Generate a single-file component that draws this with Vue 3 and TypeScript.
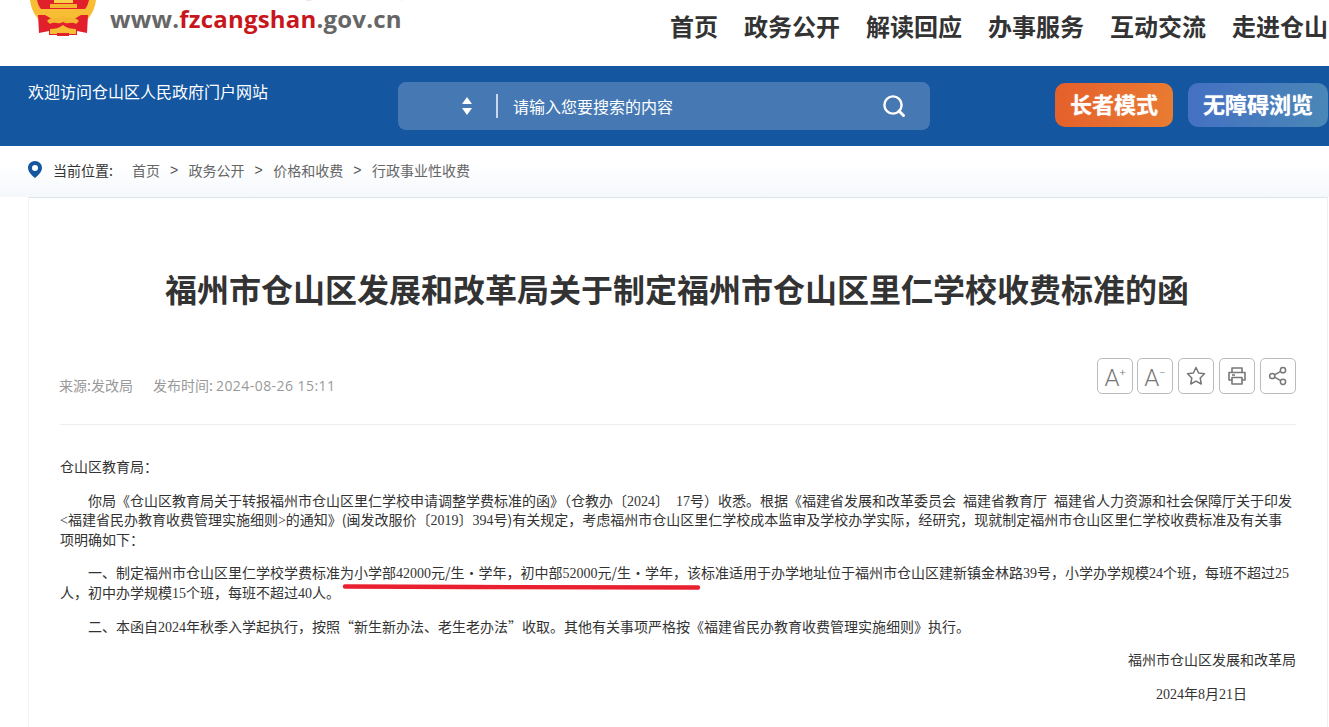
<script setup lang="ts">
const navItems = ['首页', '政务公开', '解读回应', '办事服务', '互动交流', '走进仓山']
const crumbs = ['首页', '政务公开', '价格和收费', '行政事业性收费']
</script>

<template>
  <div class="page">
    <header class="top">
      <div class="brand">
        <svg class="emblem" width="70" height="38" viewBox="0 0 70 38">
          <path d="M2 0 C3 8 6 15 12 21 L58 21 C64 15 67 8 68 0 Z" fill="#f6bd35" />
          <path d="M9 0 C10 4 11 7 13 9 H57 C59 7 60 4 61 0 Z" fill="#e2202c" />
          <path d="M26 0 H45 V3 H26 Z" fill="#f8d04a" />
          <path d="M22 4 H49 V8 H22 Z" fill="#f3b62e" />
          <path d="M12 10 H58 L56 14 H14 Z" fill="#f6bd35" />
          <path d="M10 15 L17 15 L24 19 H46 L53 15 H60 L59 33 L49 31 V35 H21 V31 L11 33 Z" fill="#e2202c" />
          <path d="M19 21 C24 15 30 20 35 16 C40 20 46 15 51 21 L48 24 C43 21 40 25 35 22 C30 25 27 21 22 24 Z" fill="#f3b62e" />
          <path d="M22 29 C27 29 31 28 35 25 C39 28 43 29 48 29 L48 34 H22 Z" fill="#f6bd35" />
          <path d="M29 33 H41 V36 H29 Z" fill="#e2202c" />
        </svg>
        <div class="brand-text">
          <div class="brand-name">福州市仓山区人民政府</div>
          <div class="brand-url">www.<span>fzcangshan</span>.gov.cn</div>
        </div>
      </div>
      <nav class="nav">
        <a v-for="item in navItems" :key="item">{{ item }}</a>
      </nav>
    </header>

    <div class="band">
      <div class="welcome">欢迎访问仓山区人民政府门户网站</div>
      <div class="search">
        <svg class="updown" width="10" height="18" viewBox="0 0 10 18">
          <path d="M5 0 L10 7 H0 Z M0 11 H10 L5 18 Z" fill="#fff" />
        </svg>
        <i class="sep"></i>
        <span class="placeholder">请输入您要搜索的内容</span>
        <svg class="glass" width="24" height="24" viewBox="0 0 24 24" fill="none" stroke="#fff">
          <circle cx="11" cy="11" r="8.6" stroke-width="2.4" />
          <path d="M17 17 L21.5 21.5" stroke-width="3" stroke-linecap="round" />
        </svg>
      </div>
      <a class="mode elder">长者模式</a>
      <a class="mode access">无障碍浏览</a>
    </div>

    <div class="crumbs">
      <svg width="14" height="17" viewBox="0 0 14 17">
        <path fill-rule="evenodd" d="M7 0 C3 0 0 3 0 6.8 C0 11 4 14.5 7 17 C10 14.5 14 11 14 6.8 C14 3 11 0 7 0 Z M7 4 A3 3 0 1 1 7 10 A3 3 0 1 1 7 4 Z" fill="#14569f" />
      </svg>
      <span class="here">当前位置:</span>
      <template v-for="(c, i) in crumbs" :key="c">
        <span v-if="i > 0" class="gt">&gt;</span>
        <a>{{ c }}</a>
      </template>
    </div>

    <main class="card">
      <h1>福州市仓山区发展和改革局关于制定福州市仓山区里仁学校收费标准的函</h1>
      <div class="meta">
        <div class="source">
          <span>来源:发改局</span>
          <span>发布时间: <span class="time">2024-08-26 15:11</span></span>
        </div>
        <div class="tools">
          <button type="button" class="font-btn">A<sup>+</sup></button>
          <button type="button" class="font-btn">A<sup>−</sup></button>
          <button type="button">
            <svg width="20" height="20" viewBox="0 0 20 20" fill="none" stroke="#777" stroke-width="1.5" stroke-linejoin="round">
              <path d="M10 1.5 L12.6 7 L18.5 7.8 L14.2 12 L15.3 18 L10 15.1 L4.7 18 L5.8 12 L1.5 7.8 L7.4 7 Z" />
            </svg>
          </button>
          <button type="button">
            <svg width="20" height="20" viewBox="0 0 20 20" fill="none" stroke="#777" stroke-width="1.6" stroke-linejoin="round">
              <path d="M5 6 V2 H15 V6" />
              <path d="M5 14 H2 V6.5 H18 V14 H15" />
              <path d="M5 11.5 H15 V18 H5 Z" />
              <path d="M5 9 H8" />
            </svg>
          </button>
          <button type="button">
            <svg width="20" height="20" viewBox="0 0 20 20" fill="none" stroke="#777" stroke-width="1.5">
              <circle cx="4.2" cy="10" r="2.6" />
              <circle cx="15" cy="4.2" r="2.6" />
              <circle cx="15" cy="15.8" r="2.6" />
              <path d="M6.5 8.8 L12.7 5.4 M6.5 11.2 L12.7 14.6" />
            </svg>
          </button>
        </div>
      </div>

      <article class="content">
        <p>仓山区教育局&#xFF1A;</p>
        <p class="indent">你局《仓山区教育局关于转报福州市仓山区里仁学校申请调整学费标准的函》&#xFF08;仓教办〔<b>2024</b>〕<b>&ensp;17</b>号&#xFF09;收悉。根据《福建省发展和改革委员会<b>&ensp;</b>福建省教育厅<b>&ensp;</b>福建省人力资源和社会保障厅关于印发<br><b>&lt;</b>福建省民办教育收费管理实施细则<b>&gt;</b>的通知》(闽发改服价〔<b>2019</b>〕<b>394</b>号)有关规定&#xFF0C;考虑福州市仓山区里仁学校成本监审及学校办学实际&#xFF0C;经研究&#xFF0C;现就制定福州市仓山区里仁学校收费标准及有关事<br>项明确如下&#xFF1A;</p>
        <p class="indent marked">一、制定福州市仓山区里仁学校学费标准为小学部<b>42000</b>元/生·学年&#xFF0C;初中部<b>52000</b>元/生·学年&#xFF0C;该标准适用于办学地址位于福州市仓山区建新镇金林路<b>39</b>号&#xFF0C;小学办学规模<b>24</b>个班&#xFF0C;每班不超过<b>25</b><br>人&#xFF0C;初中办学规模<b>15</b>个班&#xFF0C;每班不超过<b>40</b>人。
          <svg class="underline" width="362" height="9" viewBox="0 0 362 9">
            <path d="M3 3.5 C120 4 250 4.5 356 4.5" fill="none" stroke="#e8202f" stroke-width="4.4" stroke-linecap="round" />
          </svg>
        </p>
        <p class="indent">二、本函自<b>2024</b>年秋季入学起执行&#xFF0C;按照“新生新办法、老生老办法”收取。其他有关事项严格按《福建省民办教育收费管理实施细则》执行。</p>
        <p class="right">福州市仓山区发展和改革局</p>
        <p class="right date"><b>2024</b>年<b>8</b>月<b>21</b>日</p>
      </article>
    </main>
  </div>
</template>

<style scoped>
.page {
  width: 1329px;
  height: 727px;
  overflow: hidden;
  background: #fff;
  font-family: "Noto Sans CJK SC", "Liberation Sans", sans-serif;
  color: #333;
}

.top {
  height: 66px;
  display: flex;
  justify-content: space-between;
  overflow: hidden;
}

.brand {
  display: flex;
  margin-left: 28px;
  gap: 12px;
}

.emblem {
  flex: none;
}

.brand-name {
  margin-top: -45px;
  font-size: 41px;
  line-height: 46px;
  font-weight: 700;
  color: #e3a0a4;
  white-space: nowrap;
}

.brand-url {
  margin-top: 1px;
  font-family: "Open Sans", "Liberation Sans", sans-serif;
  font-size: 24px;
  line-height: 33px;
  font-weight: 700;
  letter-spacing: 0.2px;
  color: #666;
}

.brand-url span {
  color: #c8161d;
}

.nav {
  display: flex;
  gap: 26px;
  padding-top: 9px;
  margin-right: 1px;
  font-size: 24px;
  line-height: 34px;
  font-weight: 700;
  white-space: nowrap;
}

.band {
  height: 80px;
  background: #14569f;
  display: flex;
  align-items: flex-start;
  padding-left: 28px;
  position: relative;
  color: #fff;
}

.welcome {
  width: 370px;
  flex: none;
  margin-top: 13px;
  font-size: 16px;
  line-height: 24px;
}

.search {
  width: 532px;
  height: 48px;
  margin-top: 16px;
  flex: none;
  background: #4679b3;
  border-radius: 8px;
  display: flex;
  align-items: center;
}

.updown {
  margin-left: 64px;
}

.sep {
  width: 2px;
  height: 24px;
  margin-left: 24px;
  background: #c8d8ea;
}

.placeholder {
  margin-left: 15px;
  flex: 1;
  font-size: 16px;
}

.glass {
  margin-right: 24px;
}

.mode {
  height: 44px;
  margin-top: 17px;
  border-radius: 10px;
  font-size: 22px;
  line-height: 40px;
  font-weight: 700;
  text-align: center;
  text-shadow: 0 0 1px rgba(255, 255, 255, 0.7);
}

.elder {
  width: 118px;
  margin-left: 125px;
  background: linear-gradient(100deg, #e55f2b, #e97c32);
}

.access {
  width: 140px;
  margin-left: 15px;
  background: linear-gradient(100deg, #4470c4, #4a87b6);
}

.crumbs {
  height: 47px;
  padding: 0 0 4px 28px;
  display: flex;
  align-items: center;
  font-size: 14px;
  color: #666;
  background: linear-gradient(#fff 35%, #f5f8fb);
}

.here {
  margin-left: 11px;
  margin-right: 19px;
  color: #333;
}

.gt {
  margin: 0 10.5px 0 10px;
  color: #555;
  font-family: "Liberation Sans", sans-serif;
}

.card {
  margin: 0 1px 0 28px;
  height: 530px;
  padding: 0 31px 0 31px;
  background: #fff;
  border-top: 1px solid #dfe4ea;
  border-left: 1px solid #f3f5f7;
  border-right: 1px solid #eef1f4;
  box-sizing: border-box;
}

h1 {
  margin: 0;
  padding: 67px 2px 0 0;
  text-align: center;
  font-size: 32px;
  line-height: 46px;
  font-weight: 700;
  color: #333;
}

.meta {
  display: flex;
  justify-content: space-between;
  margin-top: 47px;
  padding-bottom: 27px;
  border-bottom: 1px solid #eee;
}

.source {
  display: flex;
  gap: 20px;
  margin-left: -1px;
  padding-top: 16px;
  font-size: 14px;
  line-height: 22px;
  color: #999;
}

.time {
  font-family: "Open Sans", "Liberation Sans", sans-serif;
  letter-spacing: 0.45px;
}

.tools {
  display: flex;
  gap: 5px;
}

.tools button {
  width: 36px;
  height: 36px;
  padding: 0;
  display: flex;
  align-items: center;
  justify-content: center;
  background: #fff;
  border: 1px solid #bbb;
  border-radius: 5px;
}

.tools .font-btn {
  font-family: "Roboto", "Liberation Sans", sans-serif;
  font-weight: 300;
  font-size: 24px;
  color: #777;
  padding-top: 3px;
}

.tools .font-btn:first-child {
  margin-right: -1px;
}

.font-btn sup {
  font-size: 11px;
  line-height: 1;
  align-self: flex-start;
  margin-top: 5px;
}

.content {
  padding-top: 32px;
  font-size: 14px;
  line-height: 19.6px;
  color: #333;
  white-space: nowrap;
}

.content p {
  margin: 0 0 14px;
}

.content b {
  font-family: "Liberation Serif", serif;
  font-size: 14px;
  font-weight: 400;
  line-height: 0;
}

.indent {
  text-indent: 28px;
}

.marked {
  position: relative;
}

.underline {
  position: absolute;
  left: 282px;
  top: 20px;
}

.right {
  text-align: right;
}

.date {
  padding-right: 49px;
}
</style>
